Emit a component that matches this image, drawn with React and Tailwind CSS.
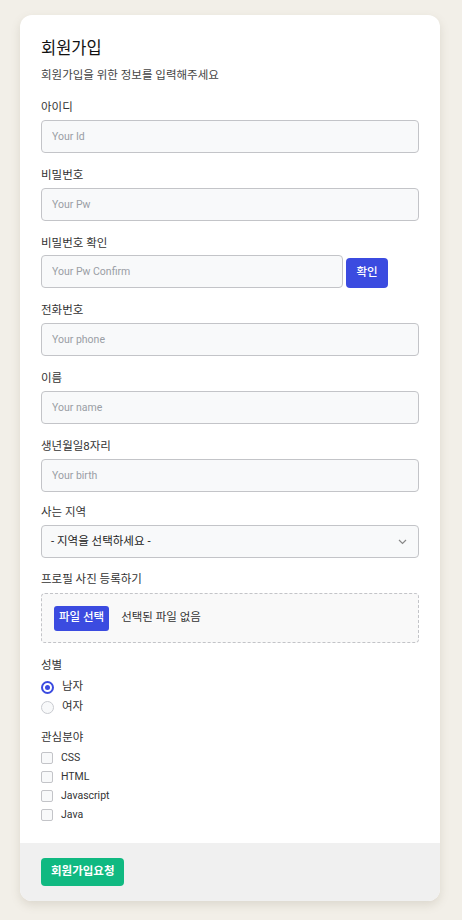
import React from "react";

const font = { fontFamily: 'Roboto, "Noto Sans CJK KR", sans-serif' };

function Label({ children, className = "mb-[5px]" }) {
  return (
    <div className={"flex h-4 items-center text-[11.5px] leading-4 text-[#333] " + className}>{children}</div>
  );
}

function TextInput({ placeholder, className = "" }) {
  return (
    <input
      type="text"
      placeholder={placeholder}
      className={
        "block h-[33px] w-full rounded-[4px] border border-[#c3c4c8] bg-[#f8f9fa] px-[10px] text-[10.5px] text-[#333] placeholder:text-[#9a9ea5] outline-none " +
        className
      }
    />
  );
}

function Field({ label, placeholder }) {
  return (
    <div className="flex flex-col">
      <Label>{label}</Label>
      <TextInput placeholder={placeholder} />
    </div>
  );
}

function Radio({ checked, label }) {
  return (
    <label className="flex h-5 items-center gap-[8px] text-[11.5px] text-[#333]">
      {checked ? (
        <span className="flex h-[13px] w-[13px] items-center justify-center rounded-full border-2 border-[#3b4be0]">
          <span className="h-[5px] w-[5px] rounded-full bg-[#3b4be0]" />
        </span>
      ) : (
        <span className="h-[13px] w-[13px] rounded-full border border-[#c9cbd0] bg-[#f8f9fa]" />
      )}
      <span>{label}</span>
    </label>
  );
}

function Check({ label }) {
  return (
    <label className="flex h-[19px] items-center gap-[8px] text-[10.5px] text-[#333]">
      <span className="h-[12px] w-[12px] rounded-[2px] border border-[#c3c4c8] bg-[#f8f9fa]" />
      <span>{label}</span>
    </label>
  );
}

export default function App() {
  return (
    <div className="min-h-[920px] bg-[#f2efe8] px-[20px] pt-[15px]" style={font}>
      <div className="w-[420px] overflow-hidden rounded-[12px] bg-white shadow-[0_4px_10px_rgba(120,110,90,0.18)]">
        <div className="flex flex-col px-[21px] pt-[22px] pb-[19px]">
          <h1 className="flex h-6 items-center text-[16.5px] text-[#111]">회원가입</h1>
          <p className="mt-[7px] flex h-4 items-center text-[11.5px] text-[#444]">회원가입을 위한 정보를 입력해주세요</p>

          <div className="mt-[15px] flex flex-col gap-[14px]">
            <Field label="아이디" placeholder="Your Id" />
            <Field label="비밀번호" placeholder="Your Pw" />
            <div className="flex flex-col">
              <Label className="mb-[4px]">비밀번호 확인</Label>
              <div className="flex items-end gap-[3px]">
                <TextInput placeholder="Your Pw Confirm" className="!w-[302px]" />
                <button className="h-[30px] w-[42px] rounded-[4px] bg-[#3b4be0] text-[11.5px] font-medium text-white">확인</button>
              </div>
            </div>
            <Field label="전화번호" placeholder="Your phone" />
            <Field label="이름" placeholder="Your name" />
            <Field label="생년월일8자리" placeholder="Your birth" />

            <div className="-mt-[2px] flex flex-col">
              <Label>사는 지역</Label>
              <div className="flex h-[33px] items-center justify-between rounded-[4px] border border-[#c3c4c8] bg-[#f8f9fa] pl-[9px] pr-[11px] text-[11.5px] text-[#222]">
                <span>- 지역을 선택하세요 -</span>
                <svg width="9" height="6" viewBox="0 0 9 6" fill="none">
                  <path d="M1 1l3.5 3.5L8 1" stroke="#888" strokeWidth="1.2" />
                </svg>
              </div>
            </div>

            <div className="-mt-[1px] flex flex-col">
              <Label className="mb-[6px]">프로필 사진 등록하기</Label>
              <div className="flex h-[50px] items-center gap-[12px] rounded-[4px] border border-dashed border-[#c3c4c8] bg-[#f9f9f9] px-[12px]">
                <span className="flex h-[25px] items-center rounded-[3px] bg-[#3b4be0] px-[5px] text-[11.5px] font-medium text-white">파일 선택</span>
                <span className="text-[11.5px] text-[#333]">선택된 파일 없음</span>
              </div>
            </div>

            <div className="flex flex-col">
              <Label className="mb-[4px]">성별</Label>
              <Radio checked label="남자" />
              <Radio label="여자" />
            </div>

            <div className="-mt-[2px] flex flex-col">
              <Label className="mb-[3px]">관심분야</Label>
              <Check label="CSS" />
              <Check label="HTML" />
              <Check label="Javascript" />
              <Check label="Java" />
            </div>
          </div>
        </div>

        <div className="bg-[#f0f0f0] px-[21px] py-[15px]">
          <button className="h-[28px] rounded-[4px] bg-[#10b981] px-[10px] text-[11.5px] font-semibold text-white">회원가입요청</button>
        </div>
      </div>
    </div>
  );
}
